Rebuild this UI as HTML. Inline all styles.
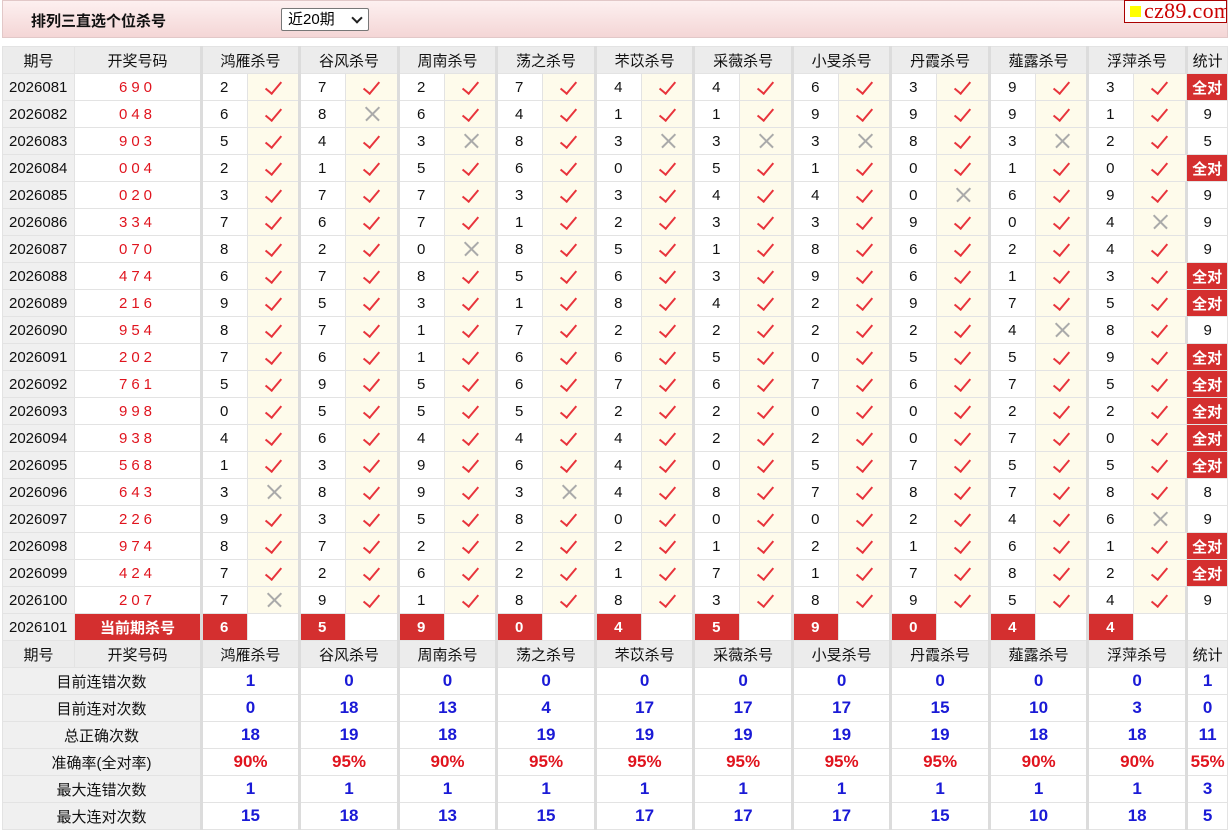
<!DOCTYPE html>
<html><head><meta charset="utf-8"><style>
body{margin:0;background:#fff;font-family:"Liberation Sans","Noto Sans CJK SC",sans-serif;}
.top{position:absolute;left:2px;top:0;width:1224px;height:36px;background:linear-gradient(#fdf0f0,#f4d6d6);border:1px solid #e2c8c8;}
.title{position:absolute;left:28px;top:9px;font-size:15px;font-weight:bold;color:#111;}
.sel{position:absolute;left:278px;top:7px;width:86px;height:21px;border:1px solid #777;background:#fff;font-size:15px;line-height:21px;border-radius:2px;}
.sel span{position:absolute;left:6px;}
.sel i{position:absolute;right:7px;top:5px;width:6px;height:6px;border-right:2px solid #222;border-bottom:2px solid #222;transform:rotate(45deg);}
.logo{position:absolute;left:1124px;top:0;width:101px;height:21px;border:1px solid #a00;background:#fff;overflow:hidden;}
.logo b{position:absolute;left:5px;top:5px;width:11px;height:11px;background:#ff0;}
.logo span{position:absolute;left:19px;top:-3px;font-family:"Liberation Serif",serif;font-size:22px;color:#c00;letter-spacing:0.3px;}
table{position:absolute;left:2px;top:46px;border-collapse:collapse;table-layout:fixed;width:1225px;}
td{height:26px;border:1px solid #e3e3e3;text-align:center;font-size:15px;padding:0;color:#111;white-space:nowrap;}
tr.h td{background:#ececec;}
td.q{background:#f0f0f0;text-align:left;padding-left:6px;}
td.r{color:#e0141e;letter-spacing:4px;}
td.g{border-left:3px solid #dcdcdc;text-align:left;padding-left:17px;}
tr.h td.g{text-align:center;padding-left:0;}
td.y,td.n{background:#fefbeb;position:relative;}
td.y::after{content:"";position:absolute;left:21px;top:4px;width:7px;height:14px;border-right:2px solid #e8343c;border-bottom:2px solid #e8343c;transform:rotate(40deg);}
td.n::before,td.n::after{content:"";position:absolute;left:17px;top:12px;width:19px;height:1.5px;background:#aaa;transform:rotate(45deg);}
td.n::after{transform:rotate(-45deg);}
td.a{background:#d42f2f;color:#fff;font-weight:bold;}
td.k{background:#d42f2f;color:#fff;font-weight:bold;text-align:left;padding-left:17px;border-left:3px solid #dcdcdc;}
td.e{background:#fff;}
td.l{background:#f0f0f0;}
td.b{color:#1a1ad6;font-weight:bold;font-size:17px;border-left:3px solid #dcdcdc;}
td.p{color:#e0141e;font-weight:bold;font-size:17px;border-left:3px solid #dcdcdc;}
td.s{border-left:3px solid #dcdcdc;}
</style></head><body>
<div class="top"><div class="title">排列三直选个位杀号</div><div class="sel"><span>近20期</span><i></i></div></div>
<div class="logo"><b></b><span>cz89.com</span></div>
<table>
<colgroup><col style="width:72px"><col style="width:127px"><col style="width:46px"><col style="width:52px"><col style="width:46px"><col style="width:53px"><col style="width:46px"><col style="width:52px"><col style="width:46px"><col style="width:53px"><col style="width:46px"><col style="width:52px"><col style="width:46px"><col style="width:53px"><col style="width:46px"><col style="width:52px"><col style="width:46px"><col style="width:53px"><col style="width:46px"><col style="width:52px"><col style="width:46px"><col style="width:53px"><col style="width:41px"></colgroup>
<tr class="h"><td>期号</td><td>开奖号码</td><td class="g" colspan="2">鸿雁杀号</td><td class="g" colspan="2">谷风杀号</td><td class="g" colspan="2">周南杀号</td><td class="g" colspan="2">荡之杀号</td><td class="g" colspan="2">芣苡杀号</td><td class="g" colspan="2">采薇杀号</td><td class="g" colspan="2">小旻杀号</td><td class="g" colspan="2">丹霞杀号</td><td class="g" colspan="2">薤露杀号</td><td class="g" colspan="2">浮萍杀号</td><td class="s">统计</td></tr>
<tr><td class="q">2026081</td><td class="r">690</td><td class="g">2</td><td class="y"></td><td class="g">7</td><td class="y"></td><td class="g">2</td><td class="y"></td><td class="g">7</td><td class="y"></td><td class="g">4</td><td class="y"></td><td class="g">4</td><td class="y"></td><td class="g">6</td><td class="y"></td><td class="g">3</td><td class="y"></td><td class="g">9</td><td class="y"></td><td class="g">3</td><td class="y"></td><td class="a">全对</td></tr>
<tr><td class="q">2026082</td><td class="r">048</td><td class="g">6</td><td class="y"></td><td class="g">8</td><td class="n"></td><td class="g">6</td><td class="y"></td><td class="g">4</td><td class="y"></td><td class="g">1</td><td class="y"></td><td class="g">1</td><td class="y"></td><td class="g">9</td><td class="y"></td><td class="g">9</td><td class="y"></td><td class="g">9</td><td class="y"></td><td class="g">1</td><td class="y"></td><td class="s">9</td></tr>
<tr><td class="q">2026083</td><td class="r">903</td><td class="g">5</td><td class="y"></td><td class="g">4</td><td class="y"></td><td class="g">3</td><td class="n"></td><td class="g">8</td><td class="y"></td><td class="g">3</td><td class="n"></td><td class="g">3</td><td class="n"></td><td class="g">3</td><td class="n"></td><td class="g">8</td><td class="y"></td><td class="g">3</td><td class="n"></td><td class="g">2</td><td class="y"></td><td class="s">5</td></tr>
<tr><td class="q">2026084</td><td class="r">004</td><td class="g">2</td><td class="y"></td><td class="g">1</td><td class="y"></td><td class="g">5</td><td class="y"></td><td class="g">6</td><td class="y"></td><td class="g">0</td><td class="y"></td><td class="g">5</td><td class="y"></td><td class="g">1</td><td class="y"></td><td class="g">0</td><td class="y"></td><td class="g">1</td><td class="y"></td><td class="g">0</td><td class="y"></td><td class="a">全对</td></tr>
<tr><td class="q">2026085</td><td class="r">020</td><td class="g">3</td><td class="y"></td><td class="g">7</td><td class="y"></td><td class="g">7</td><td class="y"></td><td class="g">3</td><td class="y"></td><td class="g">3</td><td class="y"></td><td class="g">4</td><td class="y"></td><td class="g">4</td><td class="y"></td><td class="g">0</td><td class="n"></td><td class="g">6</td><td class="y"></td><td class="g">9</td><td class="y"></td><td class="s">9</td></tr>
<tr><td class="q">2026086</td><td class="r">334</td><td class="g">7</td><td class="y"></td><td class="g">6</td><td class="y"></td><td class="g">7</td><td class="y"></td><td class="g">1</td><td class="y"></td><td class="g">2</td><td class="y"></td><td class="g">3</td><td class="y"></td><td class="g">3</td><td class="y"></td><td class="g">9</td><td class="y"></td><td class="g">0</td><td class="y"></td><td class="g">4</td><td class="n"></td><td class="s">9</td></tr>
<tr><td class="q">2026087</td><td class="r">070</td><td class="g">8</td><td class="y"></td><td class="g">2</td><td class="y"></td><td class="g">0</td><td class="n"></td><td class="g">8</td><td class="y"></td><td class="g">5</td><td class="y"></td><td class="g">1</td><td class="y"></td><td class="g">8</td><td class="y"></td><td class="g">6</td><td class="y"></td><td class="g">2</td><td class="y"></td><td class="g">4</td><td class="y"></td><td class="s">9</td></tr>
<tr><td class="q">2026088</td><td class="r">474</td><td class="g">6</td><td class="y"></td><td class="g">7</td><td class="y"></td><td class="g">8</td><td class="y"></td><td class="g">5</td><td class="y"></td><td class="g">6</td><td class="y"></td><td class="g">3</td><td class="y"></td><td class="g">9</td><td class="y"></td><td class="g">6</td><td class="y"></td><td class="g">1</td><td class="y"></td><td class="g">3</td><td class="y"></td><td class="a">全对</td></tr>
<tr><td class="q">2026089</td><td class="r">216</td><td class="g">9</td><td class="y"></td><td class="g">5</td><td class="y"></td><td class="g">3</td><td class="y"></td><td class="g">1</td><td class="y"></td><td class="g">8</td><td class="y"></td><td class="g">4</td><td class="y"></td><td class="g">2</td><td class="y"></td><td class="g">9</td><td class="y"></td><td class="g">7</td><td class="y"></td><td class="g">5</td><td class="y"></td><td class="a">全对</td></tr>
<tr><td class="q">2026090</td><td class="r">954</td><td class="g">8</td><td class="y"></td><td class="g">7</td><td class="y"></td><td class="g">1</td><td class="y"></td><td class="g">7</td><td class="y"></td><td class="g">2</td><td class="y"></td><td class="g">2</td><td class="y"></td><td class="g">2</td><td class="y"></td><td class="g">2</td><td class="y"></td><td class="g">4</td><td class="n"></td><td class="g">8</td><td class="y"></td><td class="s">9</td></tr>
<tr><td class="q">2026091</td><td class="r">202</td><td class="g">7</td><td class="y"></td><td class="g">6</td><td class="y"></td><td class="g">1</td><td class="y"></td><td class="g">6</td><td class="y"></td><td class="g">6</td><td class="y"></td><td class="g">5</td><td class="y"></td><td class="g">0</td><td class="y"></td><td class="g">5</td><td class="y"></td><td class="g">5</td><td class="y"></td><td class="g">9</td><td class="y"></td><td class="a">全对</td></tr>
<tr><td class="q">2026092</td><td class="r">761</td><td class="g">5</td><td class="y"></td><td class="g">9</td><td class="y"></td><td class="g">5</td><td class="y"></td><td class="g">6</td><td class="y"></td><td class="g">7</td><td class="y"></td><td class="g">6</td><td class="y"></td><td class="g">7</td><td class="y"></td><td class="g">6</td><td class="y"></td><td class="g">7</td><td class="y"></td><td class="g">5</td><td class="y"></td><td class="a">全对</td></tr>
<tr><td class="q">2026093</td><td class="r">998</td><td class="g">0</td><td class="y"></td><td class="g">5</td><td class="y"></td><td class="g">5</td><td class="y"></td><td class="g">5</td><td class="y"></td><td class="g">2</td><td class="y"></td><td class="g">2</td><td class="y"></td><td class="g">0</td><td class="y"></td><td class="g">0</td><td class="y"></td><td class="g">2</td><td class="y"></td><td class="g">2</td><td class="y"></td><td class="a">全对</td></tr>
<tr><td class="q">2026094</td><td class="r">938</td><td class="g">4</td><td class="y"></td><td class="g">6</td><td class="y"></td><td class="g">4</td><td class="y"></td><td class="g">4</td><td class="y"></td><td class="g">4</td><td class="y"></td><td class="g">2</td><td class="y"></td><td class="g">2</td><td class="y"></td><td class="g">0</td><td class="y"></td><td class="g">7</td><td class="y"></td><td class="g">0</td><td class="y"></td><td class="a">全对</td></tr>
<tr><td class="q">2026095</td><td class="r">568</td><td class="g">1</td><td class="y"></td><td class="g">3</td><td class="y"></td><td class="g">9</td><td class="y"></td><td class="g">6</td><td class="y"></td><td class="g">4</td><td class="y"></td><td class="g">0</td><td class="y"></td><td class="g">5</td><td class="y"></td><td class="g">7</td><td class="y"></td><td class="g">5</td><td class="y"></td><td class="g">5</td><td class="y"></td><td class="a">全对</td></tr>
<tr><td class="q">2026096</td><td class="r">643</td><td class="g">3</td><td class="n"></td><td class="g">8</td><td class="y"></td><td class="g">9</td><td class="y"></td><td class="g">3</td><td class="n"></td><td class="g">4</td><td class="y"></td><td class="g">8</td><td class="y"></td><td class="g">7</td><td class="y"></td><td class="g">8</td><td class="y"></td><td class="g">7</td><td class="y"></td><td class="g">8</td><td class="y"></td><td class="s">8</td></tr>
<tr><td class="q">2026097</td><td class="r">226</td><td class="g">9</td><td class="y"></td><td class="g">3</td><td class="y"></td><td class="g">5</td><td class="y"></td><td class="g">8</td><td class="y"></td><td class="g">0</td><td class="y"></td><td class="g">0</td><td class="y"></td><td class="g">0</td><td class="y"></td><td class="g">2</td><td class="y"></td><td class="g">4</td><td class="y"></td><td class="g">6</td><td class="n"></td><td class="s">9</td></tr>
<tr><td class="q">2026098</td><td class="r">974</td><td class="g">8</td><td class="y"></td><td class="g">7</td><td class="y"></td><td class="g">2</td><td class="y"></td><td class="g">2</td><td class="y"></td><td class="g">2</td><td class="y"></td><td class="g">1</td><td class="y"></td><td class="g">2</td><td class="y"></td><td class="g">1</td><td class="y"></td><td class="g">6</td><td class="y"></td><td class="g">1</td><td class="y"></td><td class="a">全对</td></tr>
<tr><td class="q">2026099</td><td class="r">424</td><td class="g">7</td><td class="y"></td><td class="g">2</td><td class="y"></td><td class="g">6</td><td class="y"></td><td class="g">2</td><td class="y"></td><td class="g">1</td><td class="y"></td><td class="g">7</td><td class="y"></td><td class="g">1</td><td class="y"></td><td class="g">7</td><td class="y"></td><td class="g">8</td><td class="y"></td><td class="g">2</td><td class="y"></td><td class="a">全对</td></tr>
<tr><td class="q">2026100</td><td class="r">207</td><td class="g">7</td><td class="n"></td><td class="g">9</td><td class="y"></td><td class="g">1</td><td class="y"></td><td class="g">8</td><td class="y"></td><td class="g">8</td><td class="y"></td><td class="g">3</td><td class="y"></td><td class="g">8</td><td class="y"></td><td class="g">9</td><td class="y"></td><td class="g">5</td><td class="y"></td><td class="g">4</td><td class="y"></td><td class="s">9</td></tr>
<tr><td class="q">2026101</td><td class="a">当前期杀号</td><td class="k">6</td><td class="e"></td><td class="k">5</td><td class="e"></td><td class="k">9</td><td class="e"></td><td class="k">0</td><td class="e"></td><td class="k">4</td><td class="e"></td><td class="k">5</td><td class="e"></td><td class="k">9</td><td class="e"></td><td class="k">0</td><td class="e"></td><td class="k">4</td><td class="e"></td><td class="k">4</td><td class="e"></td><td class="s"></td></tr>
<tr class="h"><td>期号</td><td>开奖号码</td><td class="g" colspan="2">鸿雁杀号</td><td class="g" colspan="2">谷风杀号</td><td class="g" colspan="2">周南杀号</td><td class="g" colspan="2">荡之杀号</td><td class="g" colspan="2">芣苡杀号</td><td class="g" colspan="2">采薇杀号</td><td class="g" colspan="2">小旻杀号</td><td class="g" colspan="2">丹霞杀号</td><td class="g" colspan="2">薤露杀号</td><td class="g" colspan="2">浮萍杀号</td><td class="s">统计</td></tr>
<tr><td class="l" colspan="2">目前连错次数</td><td class="b" colspan="2">1</td><td class="b" colspan="2">0</td><td class="b" colspan="2">0</td><td class="b" colspan="2">0</td><td class="b" colspan="2">0</td><td class="b" colspan="2">0</td><td class="b" colspan="2">0</td><td class="b" colspan="2">0</td><td class="b" colspan="2">0</td><td class="b" colspan="2">0</td><td class="b">1</td></tr>
<tr><td class="l" colspan="2">目前连对次数</td><td class="b" colspan="2">0</td><td class="b" colspan="2">18</td><td class="b" colspan="2">13</td><td class="b" colspan="2">4</td><td class="b" colspan="2">17</td><td class="b" colspan="2">17</td><td class="b" colspan="2">17</td><td class="b" colspan="2">15</td><td class="b" colspan="2">10</td><td class="b" colspan="2">3</td><td class="b">0</td></tr>
<tr><td class="l" colspan="2">总正确次数</td><td class="b" colspan="2">18</td><td class="b" colspan="2">19</td><td class="b" colspan="2">18</td><td class="b" colspan="2">19</td><td class="b" colspan="2">19</td><td class="b" colspan="2">19</td><td class="b" colspan="2">19</td><td class="b" colspan="2">19</td><td class="b" colspan="2">18</td><td class="b" colspan="2">18</td><td class="b">11</td></tr>
<tr><td class="l" colspan="2">准确率(全对率)</td><td class="p" colspan="2">90%</td><td class="p" colspan="2">95%</td><td class="p" colspan="2">90%</td><td class="p" colspan="2">95%</td><td class="p" colspan="2">95%</td><td class="p" colspan="2">95%</td><td class="p" colspan="2">95%</td><td class="p" colspan="2">95%</td><td class="p" colspan="2">90%</td><td class="p" colspan="2">90%</td><td class="p">55%</td></tr>
<tr><td class="l" colspan="2">最大连错次数</td><td class="b" colspan="2">1</td><td class="b" colspan="2">1</td><td class="b" colspan="2">1</td><td class="b" colspan="2">1</td><td class="b" colspan="2">1</td><td class="b" colspan="2">1</td><td class="b" colspan="2">1</td><td class="b" colspan="2">1</td><td class="b" colspan="2">1</td><td class="b" colspan="2">1</td><td class="b">3</td></tr>
<tr><td class="l" colspan="2">最大连对次数</td><td class="b" colspan="2">15</td><td class="b" colspan="2">18</td><td class="b" colspan="2">13</td><td class="b" colspan="2">15</td><td class="b" colspan="2">17</td><td class="b" colspan="2">17</td><td class="b" colspan="2">17</td><td class="b" colspan="2">15</td><td class="b" colspan="2">10</td><td class="b" colspan="2">18</td><td class="b">5</td></tr>
</table>
</body></html>
